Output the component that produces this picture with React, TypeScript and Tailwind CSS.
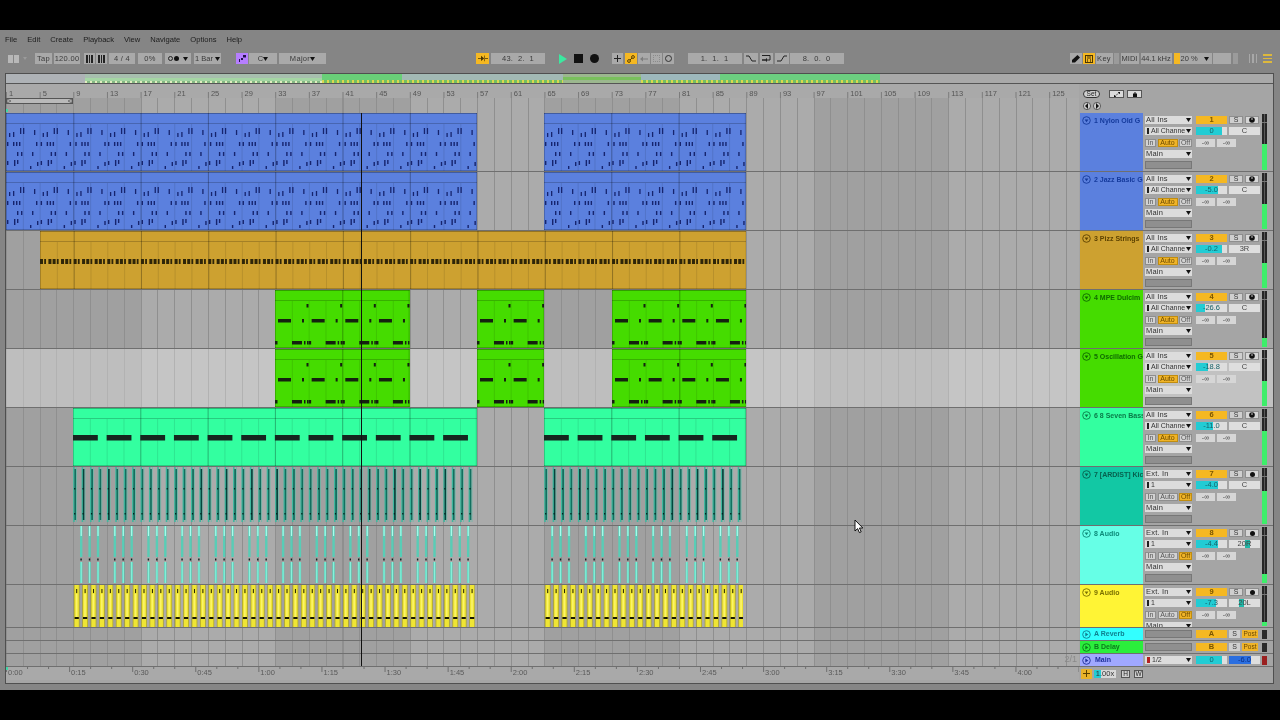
import React from "react";

const BAR = 8.4125;

type Kind = "midi" | "pizz" | "dul" | "bass" | "s7" | "s8" | "s9";

function ClipArt({ a, b, kind, h }: { a: number; b: number; kind: Kind; h: number }) {
  const left = (a - 1) * BAR;
  const w = (b - a) * BAR;
  const out: React.ReactNode[] = [];
  const r = (x: number, y: number, wd: number, ht: number, fill: string) => {
    if (x < w) out.push(<rect key={out.length} x={x} y={y} width={Math.min(wd, w - x)} height={ht} fill={fill} />);
  };
  const P = BAR * 4;
  const hasHead = kind === "midi" || kind === "pizz" || kind === "dul" || kind === "bass";
  if (hasHead) {
    const count = Math.ceil((left + w) / (BAR * 2)) + 1;
    for (let i = 0; i < count; i++) {
      const x = i * BAR * 2 - left;
      if (x <= 0 || x >= w) continue;
      if (i % 4 === 0) r(x, 0, 1, h, "rgba(0,0,0,0.3)");
      else r(x, 11, 1, h - 11, "rgba(0,0,0,0.1)");
    }
    r(0, 0, w, 1, "rgba(0,0,0,0.28)");
    r(0, 10, w, 1, "rgba(0,0,0,0.2)");
    r(0, 0, 1, h, "rgba(0,0,0,0.2)");
    r(w - 1, 0, 1, h, "rgba(0,0,0,0.2)");
    r(0, h - 1, w, 1, "rgba(0,0,0,0.2)");
  }
  const n = Math.ceil(w / P);
  for (let i = 0; i < n; i++) {
    const o = i * P;
    const v = i % 4;
    if (kind === "midi") {
      const c = "#16246e";
      [[3, 20, 4], [7, 19, 5], [14, 15, 6], [17, 15, 6], [28, 17, 5]].forEach(([x, y, t]) => r(o + x, y, 1.3, t, c));
      [[1, 29], [7, 29], [10, 29], [13, 29], [30, 29]].forEach(([x, y]) => r(o + x + (v === 2 ? 1 : 0), y, 1.4, 4, c));
      [[11, 39], [15, 39], [26, 39]].forEach(([x, y]) => r(o + x, y, 1.4, 4, c));
      [[1, 48, 4], [8, 47, 6], [11, 47, 4], [24, 53, 3], [31, 49, 4]].forEach(([x, y, t]) => r(o + x, y, 1.4, t, c));
    } else if (kind === "pizz") {
      for (let j = 0; j < 8; j++) r(o + j * 4.206, 28, j % 3 === 1 ? 1.8 : 3, 5, "#2e2508");
    } else if (kind === "dul") {
      const c = "#14200f";
      r(o + 31.5, 14, 2, 3.5, c);
      r(o + 3, 29, 13, 3.5, c);
      r(o + 27, 29, 2, 3.5, c);
      r(o, 51, 2.5, 3.5, c);
      r(o + 17, 51, 10, 3.5, c);
      r(o + 29, 51, 1.5, 3.5, c);
      r(o + 32, 51, 1.5, 3.5, c);
    } else if (kind === "bass") {
      r(o, 27, 24.8, 5.5, "#15261f");
    } else if (kind === "s7") {
      for (let j = 0; j < 4; j++) {
        const x = o + j * BAR + 0.2;
        const dark = (i + j) % 5 === 1 ? "#05453d" : "#12705f";
        r(x, 0, 1.6, h - 3, "#3fb89f");
        r(x + 1.2, 2, 1.8, h - 7, dark);
        r(x + 3, 0, 0.8, h - 3, "#6fb8a8");
        r(x + 0.9, 21, 1.2, 1.5, "#03221f");
        r(x + 0.9, 46, 1.2, 1.5, "#03221f");
      }
    } else if (kind === "s8") {
      for (let j = 0; j < 3; j++) {
        const x = o + 7 + j * BAR;
        r(x, 0, 2.4, 31, "#58cdb6");
        r(x, 36, 2.4, 21, "#58cdb6");
        r(x + 0.6, 0, 1.2, 10, "#a8ffee");
        r(x + 0.6, 36, 1.2, 21, "#86f2dc");
        r(x + 0.4, 32.5, 1.4, 2, "#10201c");
      }
    } else if (kind === "s9") {
      for (let j = 0; j < 4; j++) {
        const x = o + j * BAR + 0.8;
        r(x, 0, 5.8, 42, "#aea62e");
        r(x + 0.8, 0, 4.2, 42, "#efe534");
        r(x + 2, 9, 1.6, 23, "#fbf46a");
        r(x + 2.4, 4, 1, 4, "#222200");
        r(x + 0.8, 32, 4.2, 2, "#171700");
      }
    }
  }
  return (
    <svg className="absolute inset-0 block" width={w} height={h}>
      {out}
    </svg>
  );
}

function Clip({ a, b, color, kind, h }: { a: number; b: number; color: string; kind: Kind; h: number }) {
  return (
    <div className="absolute top-0" style={{ left: (a - 1) * BAR, width: (b - a) * BAR, height: h, background: color }}>
      <ClipArt a={a} b={b} kind={kind} h={h} />
    </div>
  );
}

const Caret = () => (
  <svg width="5" height="4" viewBox="0 0 5 4" className="shrink-0">
    <path d="M0 0H5L2.5 4Z" fill="#111" />
  </svg>
);

function Sel({ label, bar, red }: { label: string; bar?: boolean; red?: boolean }) {
  return (
    <div className={bar ? "h-[8px] shrink-0 bg-[#dcdcdc] flex items-center px-[1px] text-[7px] leading-[8px] text-[#333] overflow-hidden" : "h-[8px] shrink-0 bg-[#dcdcdc] flex items-center px-[1px] text-[7.5px] leading-[8px] tracking-[0.2px] text-[#333] overflow-hidden"}>
      {bar && <span className={red ? "w-[3px] h-[6px] bg-[#b52020] mr-[2px] ml-[1px] shrink-0" : "w-[2px] h-[6px] bg-[#222] mr-[2px] ml-[1px] shrink-0"} />}
      <span className="flex-1 overflow-hidden whitespace-nowrap">{label}</span>
      <Caret />
    </div>
  );
}

function MonBtn({ t, on, cls }: { t: string; on?: boolean; cls: string }) {
  return (
    <div className={`h-[8px] border text-[7px] leading-[6px] text-center shrink-0 ${cls} ${on ? "bg-[#f0b428] text-[#6b4a00] border-[#c08d10]" : "bg-[#d2d2d2] text-[#555] border-[#8e8e8e]"}`}>
      {t}
    </div>
  );
}

function Vol({ v, pct, color = "#22ccd4", txt = "#16626a" }: { v: string; pct: number; color?: string; txt?: string }) {
  return (
    <div className="relative w-[31px] h-[8px] bg-[#dedede] overflow-hidden">
      <div className="h-full" style={{ width: `${pct}%`, background: color }} />
      <div className="absolute inset-0 text-center text-[7.5px] leading-[8px]" style={{ color: txt }}>
        {v}
      </div>
    </div>
  );
}

function Pan({ v, from, to }: { v: string; from?: number; to?: number }) {
  return (
    <div className="relative w-[31px] h-[8px] bg-[#dedede] overflow-hidden">
      {from !== undefined && <div className="absolute top-0 bottom-0 bg-[#1fb8a8]" style={{ left: `${from}%`, width: `${(to ?? 0) - from}%` }} />}
      <div className="absolute inset-0 text-center text-[7.5px] leading-[8px] text-[#444]">{v}</div>
    </div>
  );
}

function Disc({ c, right }: { c: string; right?: boolean }) {
  return (
    <svg width="9" height="9" viewBox="0 0 9 9" className="shrink-0">
      <circle cx="4.5" cy="4.5" r="3.8" fill="none" stroke={c} strokeWidth="0.9" />
      {right ? <path d="M3.3 2.6L6.3 4.5L3.3 6.4Z" fill={c} /> : <path d="M2.6 3.4H6.4L4.5 6.2Z" fill={c} />}
    </svg>
  );
}

function Meter({ top, h }: { top: number; h: number }) {
  const green = h - top;
  return (
    <div className="relative w-[5px] h-full bg-[#262626] overflow-hidden">
      <div className="absolute left-[2px] top-0 bottom-0 w-[1px] bg-[#5a5a5a]" />
      <div className="absolute left-0 right-0 h-[1px] top-[8px] bg-[#777]" />
      <div className="absolute left-0 right-0 bottom-0 bg-[#3eee6a]" style={{ height: green }} />
    </div>
  );
}

type T = {
  name: string;
  color: string;
  txt: string;
  vol: string;
  pct: number;
  pan: string;
  panFrom?: number;
  panTo?: number;
  meterTop: number;
  ext?: boolean;
  selected?: boolean;
  clips: { a: number; b: number; kind: Kind; color: string }[];
  n: string;
  h: number;
};

const BLUE = "#5b80de";
const GREEN = "#45dc00";
const MINT = "#33ffa0";
const pair = (c: string, k: Kind, end = 57, e2 = 89) => [
  { a: 9, b: end, kind: k, color: c },
  { a: 65, b: e2, kind: k, color: c },
];
const dul = (c: string) => [
  { a: 33, b: 49, kind: "dul" as Kind, color: c },
  { a: 57, b: 65, kind: "dul" as Kind, color: c },
  { a: 73, b: 89, kind: "dul" as Kind, color: c },
];
const mid = [
  { a: 1, b: 57, kind: "midi" as Kind, color: BLUE },
  { a: 65, b: 89, kind: "midi" as Kind, color: BLUE },
];

const tracks: T[] = [
  { n: "1", name: "1 Nylon Old G", color: BLUE, txt: "#153a9c", vol: "0", pct: 83, pan: "C", meterTop: 30, clips: mid, h: 59 },
  { n: "2", name: "2 Jazz Basic G", color: BLUE, txt: "#153a9c", vol: "-5.0", pct: 70, pan: "C", meterTop: 31, clips: mid, h: 59 },
  { n: "3", name: "3 Pizz Strings", color: "#cda130", txt: "#5e4300", vol: "-0.2", pct: 84, pan: "3R", meterTop: 31, clips: [{ a: 5, b: 89, kind: "pizz", color: "#cda130" }], h: 59 },
  { n: "4", name: "4 MPE Dulcim", color: GREEN, txt: "#0f6a00", vol: "-26.6", pct: 28, pan: "C", meterTop: 47, clips: dul(GREEN), h: 59 },
  { n: "5", name: "5 Oscillation G", color: GREEN, txt: "#0f6a00", vol: "-18.8", pct: 38, pan: "C", meterTop: 31, selected: true, clips: dul(GREEN), h: 59 },
  { n: "6", name: "6 8 Seven Bass", color: MINT, txt: "#0a7a48", vol: "-11.0", pct: 55, pan: "C", meterTop: 22, clips: pair(MINT, "bass"), h: 59 },
  { n: "7", name: "7 [ARDIST] Kic", color: "#12c8a4", txt: "#07604e", vol: "-4.0", pct: 70, pan: "C", meterTop: 23, ext: true, clips: pair("transparent", "s7"), h: 59 },
  { n: "8", name: "8 Audio", color: "#66ffe6", txt: "#0d8a78", vol: "-4.4", pct: 72, pan: "20R", panFrom: 50, panTo: 68, meterTop: 47, ext: true, clips: pair("transparent", "s8"), h: 59 },
  { n: "9", name: "9 Audio", color: "#fff435", txt: "#7a7000", vol: "-7.3", pct: 65, pan: "20L", panFrom: 32, panTo: 50, meterTop: 36, ext: true, clips: pair("transparent", "s9", 56.75, 88.65), h: 43 },
];

const gridBg =
  "bg-[repeating-linear-gradient(90deg,#8f8f8f_0_1px,transparent_1px_16.825px),repeating-linear-gradient(90deg,#a0a0a0_0_134.6px,#ababab_134.6px_269.2px)]";

function Row({ t }: { t: T }) {
  return (
    <div className="flex border-b border-[#6f6f6f]" style={{ height: t.h }}>
      <div className={t.selected ? "relative flex-1 overflow-hidden bg-[#ffffff50]" : "relative flex-1 overflow-hidden"}>
        {t.clips.map((c, i) => (
          <Clip key={i} a={c.a} b={c.b} color={c.color} kind={c.kind} h={t.h - 1} />
        ))}
      </div>
      <div className={t.selected ? "w-[194px] shrink-0 flex bg-[#c2c2c2] pl-[1px]" : "w-[194px] shrink-0 flex bg-[#a5a5a5] pl-[1px]"}>
        <div className="w-[63px] shrink-0 pl-[2px] pt-[3px] flex items-start gap-[3px] overflow-hidden" style={{ background: t.color }}>
          <Disc c={t.txt} />
          <span className="text-[7px] leading-[9px] font-bold whitespace-nowrap" style={{ color: t.txt }}>
            {t.name}
          </span>
        </div>
        <div className="w-[51px] shrink-0 px-[2px] pt-[3px] flex flex-col gap-[3.3px] overflow-hidden">
          <Sel label={t.ext ? "Ext. In" : "All Ins"} />
          <Sel label={t.ext ? "1" : "All Channe"} bar />
          <div className="flex justify-between shrink-0">
            <MonBtn t="In" cls="w-[11px]" />
            <MonBtn t="Auto" on={!t.ext} cls="w-[20px]" />
            <MonBtn t="Off" on={t.ext} cls="w-[13px]" />
          </div>
          <Sel label="Main" />
          <div className="h-[8px] shrink-0 bg-[#8f8f8f] border border-[#777]" />
        </div>
        <div className="w-[68px] shrink-0 pl-[2px] pt-[3px] flex flex-col gap-[3.3px]">
          <div className="flex gap-[2px]">
            <div className="w-[31px] h-[8px] bg-[#f5b822] text-[#7a5500] text-[7.5px] leading-[8px] text-center font-bold">{t.n}</div>
            <div className="w-[14px] h-[8px] bg-[#cfcfcf] border border-[#8e8e8e] text-[#333] text-[7px] leading-[6px] text-center">S</div>
            <div className="w-[14px] h-[8px] bg-[#d6d6d6] border border-[#8e8e8e] flex items-center justify-center">
              {t.ext ? (
                <span className="w-[5px] h-[5px] rounded-full bg-[#111]" />
              ) : (
                <svg width="6" height="6" viewBox="0 0 6 6">
                  <circle cx="3" cy="3" r="2.8" fill="#111" />
                  <path d="M3 .8V3" stroke="#ddd" strokeWidth="0.9" />
                </svg>
              )}
            </div>
          </div>
          <div className="flex gap-[2px]">
            <Vol v={t.vol} pct={t.pct} />
            <Pan v={t.pan} from={t.panFrom} to={t.panTo} />
          </div>
          <div className="flex gap-[2px]">
            <div className="w-[19px] h-[8px] bg-[#d6d6d6] text-[#444] text-[7px] leading-[8px] text-center">-∞</div>
            <div className="w-[19px] h-[8px] bg-[#d6d6d6] text-[#444] text-[7px] leading-[8px] text-center">-∞</div>
          </div>
        </div>
        <div className="py-[1px]">
          <Meter top={t.meterTop} h={t.h - 3} />
        </div>
      </div>
    </div>
  );
}

function ReturnRow({ name, color, txt, letter, h }: { name: string; color: string; txt: string; letter: string; h: string }) {
  return (
    <div className={`flex border-b border-[#6f6f6f] ${h}`}>
      <div className="flex-1" />
      <div className="w-[194px] shrink-0 flex bg-[#a5a5a5] pl-[1px]">
        <div className="w-[63px] shrink-0 pl-[2px] flex items-center gap-[3px] overflow-hidden" style={{ background: color }}>
          <Disc c={txt} right />
          <span className="text-[7px] font-bold" style={{ color: txt }}>
            {name}
          </span>
        </div>
        <div className="w-[51px] shrink-0 px-[2px] flex items-center">
          <div className="w-full h-[8px] bg-[#8f8f8f] border border-[#777]" />
        </div>
        <div className="w-[68px] shrink-0 pl-[2px] flex items-center gap-[2px]">
          <div className="w-[31px] h-[8px] bg-[#f5b822] text-[#7a5500] text-[7.5px] leading-[8px] text-center font-bold">{letter}</div>
          <div className="w-[11px] h-[8px] bg-[#cfcfcf] text-[#333] text-[7px] leading-[8px] text-center">S</div>
          <div className="w-[16px] h-[8px] bg-[#f0b428] text-[#6b4a00] text-[6.5px] leading-[8px] text-center">Post</div>
        </div>
        <div className="flex items-center">
          <div className="w-[5px] h-[9px] bg-[#2a2a2a]" />
        </div>
      </div>
    </div>
  );
}

const Btn = ({ className, children }: { className: string; children?: React.ReactNode }) => (
  <div className={`h-[11px] shrink-0 bg-[#a9a9a9] flex items-center justify-center whitespace-nowrap text-[7.5px] tracking-[0.3px] text-[#3a3a3a] ${className}`}>{children}</div>
);

const rulerBars = Array.from({ length: 32 }, (_, i) => 1 + i * 4);
const times = ["0:00", "0:15", "0:30", "0:45", "1:00", "1:15", "1:30", "1:45", "2:00", "2:15", "2:30", "2:45", "3:00", "3:15", "3:30", "3:45", "4:00"];

function Cursor() {
  return (
    <svg className="absolute left-[854px] top-[519px]" width="10" height="15" viewBox="0 0 10 15">
      <path d="M1 1L1 12L3.6 9.6L5.4 13.6L7.2 12.8L5.4 9L8.8 9Z" fill="#fff" stroke="#000" strokeWidth="0.9" />
    </svg>
  );
}

export default function App() {
  return (
    <div className="relative w-[1280px] h-[720px] overflow-hidden bg-black pt-[30px] font-['Liberation_Sans',sans-serif] blur-[0.35px]">
      <div className="h-[660px] bg-[#858585]">
        <div className="h-[4px]" />
        <div className="flex gap-[10px] pl-[5px] h-[12px] items-center text-[7.6px] text-[#1d1d1d]">
          {["File", "Edit", "Create", "Playback", "View", "Navigate", "Options", "Help"].map((m) => (
            <span key={m}>{m}</span>
          ))}
        </div>
        {/* toolbar */}
        <div className="flex mt-[7px] h-[11px] items-center pl-[8px] pr-[8px]">
          <div className="flex items-center">
            <div className="w-[5px] h-[8px] bg-[#b8b8b8]" />
            <div className="w-[5px] h-[8px] bg-[#b8b8b8] ml-[1px]" />
            <div className="ml-[4px] w-0 h-0 border-l-[2.5px] border-r-[2.5px] border-t-[3px] border-l-transparent border-r-transparent border-t-[#9b9b9b]" />
            <Btn className="w-[17px] ml-[8px]">Tap</Btn>
            <Btn className="w-[26px] ml-[2px]">120.00</Btn>
            <Btn className="w-[11px] ml-[4px] gap-[1px]">
              {[0, 1, 2].map((i) => <span key={i} className="w-[1.5px] h-[8px] bg-[#222]" />)}
            </Btn>
            <Btn className="w-[11px] ml-[1px] gap-[1px]">
              {[0, 1, 2].map((i) => <span key={i} className="w-[1.5px] h-[8px] bg-[#222]" />)}
            </Btn>
            <Btn className="w-[26px] ml-[2px]">4 / 4</Btn>
            <Btn className="w-[24px] ml-[3px]">0%</Btn>
            <Btn className="w-[26px] ml-[3px] gap-[1px]">
              <span className="w-[5px] h-[5px] rounded-full border border-[#222]" />
              <span className="w-[5px] h-[5px] rounded-full bg-[#111]" />
              <span className="ml-[3px]"><Caret /></span>
            </Btn>
            <Btn className="w-[27px] ml-[3px] gap-[2px] tracking-[0px]">
              1 Bar <Caret />
            </Btn>
            <div className="w-[12px] h-[11px] ml-[15px] bg-[#b67eff] flex items-center justify-center">
              <svg width="8" height="7" viewBox="0 0 8 7"><path d="M1 4H2V7H1ZM3 3H5V5H3ZM5 0H8V2.5H5Z" fill="#22134a" /></svg>
            </div>
            <Btn className="w-[28px] ml-[1px] justify-between px-[2px]">
              C <Caret />
            </Btn>
            <Btn className="w-[47px] ml-[2px] justify-between px-[3px]">
              Major <Caret />
            </Btn>
          </div>
          <div className="flex items-center ml-[150px]">
            <div className="w-[13px] h-[11px] bg-[#f5b822] flex items-center justify-center">
              <svg width="10" height="7" viewBox="0 0 10 7"><path d="M0 3H3V3.8H0ZM7 3H10V3.8H7ZM3 .8L6.2 3.4L3 6ZM6.4 .5H7V6.3H6.4Z" fill="#4a3500" /></svg>
            </div>
            <Btn className="w-[54px] ml-[2px]">43.&nbsp;&nbsp;2.&nbsp;&nbsp;1</Btn>
            <svg className="ml-[14px]" width="8" height="10" viewBox="0 0 8 10"><path d="M0 0L8 5L0 10Z" fill="#3ce8a0" /></svg>
            <div className="ml-[7px] w-[9px] h-[9px] bg-[#111]" />
            <div className="ml-[7px] w-[8.5px] h-[8.5px] rounded-full bg-[#111]" />
            <Btn className="w-[11px] ml-[13px]">
              <svg width="7" height="7" viewBox="0 0 7 7"><path d="M3 0H4V3H7V4H4V7H3V4H0V3H3Z" fill="#222" /></svg>
            </Btn>
            <div className="w-[12px] h-[11px] ml-[2px] bg-[#f5b822] flex items-center justify-center">
              <svg width="8" height="8" viewBox="0 0 8 8"><circle cx="2" cy="6" r="1.4" fill="none" stroke="#5a4000" /><circle cx="6" cy="2" r="1.4" fill="none" stroke="#5a4000" /><path d="M3 5L5 3" stroke="#5a4000" /></svg>
            </div>
            <Btn className="w-[12px] ml-[1px]">
              <svg width="8" height="6" viewBox="0 0 8 6"><path d="M0 3L3 .5V2.5H8V3.5H3V5.5Z" fill="#7d7d7d" /></svg>
            </Btn>
            <Btn className="w-[11px] ml-[1px]">
              <div className="w-[7px] h-[7px] border border-dotted border-[#8a8a8a]" />
            </Btn>
            <Btn className="w-[11px] ml-[1px]">
              <div className="w-[7px] h-[7px] rounded-full border border-[#333]" />
            </Btn>
            <Btn className="w-[54px] ml-[14px]">1.&nbsp;&nbsp;1.&nbsp;&nbsp;1</Btn>
            <Btn className="w-[14px] ml-[2px]">
              <svg width="10" height="7" viewBox="0 0 10 7"><path d="M0 1H3L6 6H10" fill="none" stroke="#222" /></svg>
            </Btn>
            <Btn className="w-[13px] ml-[2px]">
              <svg width="10" height="8" viewBox="0 0 10 8"><path d="M1 .5H9V5H6M4 5H1Z" fill="none" stroke="#222" /><path d="M6 3V7L3.5 5Z" fill="#222" /></svg>
            </Btn>
            <Btn className="w-[14px] ml-[2px]">
              <svg width="10" height="7" viewBox="0 0 10 7"><path d="M0 6H4L7 1H10" fill="none" stroke="#222" /></svg>
            </Btn>
            <Btn className="w-[54px] ml-[1px]">8.&nbsp;&nbsp;0.&nbsp;&nbsp;0</Btn>
          </div>
          <div className="flex items-center ml-auto">
            <Btn className="w-[12px]">
              <svg width="8" height="8" viewBox="0 0 8 8"><path d="M5.5 0L8 2.5L3 7.5H0V5Z" fill="#111" /></svg>
            </Btn>
            <div className="w-[12px] h-[11px] ml-[1px] bg-[#f5b822] flex items-center justify-center">
              <svg width="8" height="8" viewBox="0 0 8 8"><path d="M0 0H8V8H0ZM1 1V7H2.3V4H3V7H5V4H5.7V7H7V1H5.5V4H4.5V1H3.5V4H2.5V1Z" fill="#4a3500" /></svg>
            </div>
            <Btn className="w-[17px] ml-[1px]">Key</Btn>
            <div className="w-[5px] h-[11px] ml-[1px] bg-[#9b9b9b]" />
            <Btn className="w-[18px] ml-[2px] tracking-[0px]">MIDI</Btn>
            <Btn className="w-[31px] ml-[2px] tracking-[0px]">44.1 kHz</Btn>
            <div className="relative w-[38px] h-[11px] ml-[2px] bg-[#a9a9a9] flex items-center text-[7.5px] text-[#3a3a3a]">
              <span className="w-[6px] h-full bg-[#f5b822]" />
              <span className="ml-[1px]">20 %</span>
              <span className="ml-auto mr-[3px]"><Caret /></span>
            </div>
            <Btn className="w-[18px] ml-[1px]" />
            <div className="w-[5px] h-[11px] ml-[2px] bg-[#9b9b9b]" />
            <div className="ml-[11px] flex gap-[2px]">
              {[0, 1, 2].map((i) => <span key={i} className="w-[1.5px] h-[9px] bg-[#a8a8a8]" />)}
            </div>
            <div className="ml-[6px] w-[9px] flex flex-col gap-[2px]">
              {[0, 1, 2].map((i) => <span key={i} className="h-[1.5px] bg-[#ddb83c]" />)}
            </div>
          </div>
        </div>

        {/* arrangement panel */}
        <div className="ml-[5px] mt-[9px] w-[1269px] h-[611px] border border-[#4f4f4f] bg-[#a5a5a5] flex flex-col">
          {/* overview */}
          <div className="h-[9px] shrink-0 flex bg-[#a9a9a9] overflow-hidden">
            <div className="w-[79px] bg-[#aeb2b6]" />
            <div className="w-[237px] bg-[linear-gradient(180deg,#a7bfae_0_45%,#a5d6a4_45%_100%)] flex items-end">
              <div className="w-full h-[2px] bg-[repeating-linear-gradient(90deg,#e3eec0_0_2px,#84b884_2px_5px)]" />
            </div>
            <div className="w-[241px] bg-[linear-gradient(90deg,#69cf78_0_33%,#a2b9b4_33%_100%)] flex items-end">
              <div className="w-full h-[3px] bg-[repeating-linear-gradient(90deg,#dcd850_0_2px,#74c060_2px_5px)]" />
            </div>
            <div className="w-[78px] bg-[#9bb78e] flex items-center">
              <div className="w-full h-[3px] bg-[#79c05c]" />
            </div>
            <div className="w-[239px] bg-[linear-gradient(90deg,#9db8bc_0_33%,#6ccf80_33%_100%)] flex items-end">
              <div className="w-full h-[3px] bg-[repeating-linear-gradient(90deg,#dcd850_0_2px,#74c060_2px_5px)]" />
            </div>
          </div>
          <div className="h-[1px] shrink-0 bg-[#555]" />
          {/* ruler */}
          <div className="h-[29px] shrink-0 flex">
            <div className="relative flex-1 bg-[#a9a9a9] overflow-hidden">
              <div className={`absolute left-0 right-0 top-[14px] bottom-0 ${gridBg}`} />
              <svg className="absolute inset-0" width="1073" height="29">
                {rulerBars.map((b) => (
                  <rect key={b} x={(b - 1) * BAR} y={8} width={1} height={6} fill="#7c7c7c" />
                ))}
              </svg>
              {rulerBars.map((b) => (
                <span key={b} className="absolute top-[5px] text-[7.5px] leading-[9px] text-[#555]" style={{ left: (b - 1) * BAR + 3 }}>
                  {b}
                </span>
              ))}
              <div className="absolute left-0 top-[14px] w-[67px] h-[6px] bg-[#b9b9b9] border border-[#555]" />
              <svg className="absolute left-0 top-[14px]" width="67" height="7">
                <path d="M1 1L5 3L1 5Z" fill="#bbb" stroke="#555" strokeWidth="0.7" />
                <path d="M66 1L62 3L66 5Z" fill="#bbb" stroke="#555" strokeWidth="0.7" />
              </svg>
              <div className="absolute left-0 bottom-[1px] w-[2px] h-[3px] bg-[#3fd8a8]" />
            </div>
            <div className="relative w-[194px] shrink-0 bg-[#a5a5a5] pl-[4px] pt-[6px]">
              <div className="flex items-center">
                <div className="w-[17px] h-[8px] rounded-full border border-[#333] bg-[#d0d0d0] text-[6.5px] leading-[6px] text-center text-[#222]">Set</div>
                <div className="ml-[9px] w-[15px] h-[8px] bg-[#dadada] border border-[#555] flex items-center justify-center">
                  <svg width="6" height="5" viewBox="0 0 6 5"><path d="M0 5V3L2 5ZM6 0V2L4 0ZM1.5 3.5L4.5 1.5" fill="#111" stroke="#111" strokeWidth="0.5" /></svg>
                </div>
                <div className="ml-[3px] w-[15px] h-[8px] bg-[#dadada] border border-[#555] flex items-center justify-center">
                  <svg width="6" height="5" viewBox="0 0 6 5"><path d="M1 2H5V5H1Z" fill="#111" /><path d="M2 2V1H4V2" fill="none" stroke="#111" /></svg>
                </div>
              </div>
              <div className="flex gap-[2px] mt-[4px]">
                {["M5 1L2 4L5 7", "M3 1L6 4L3 7"].map((d) => (
                  <svg key={d} width="8" height="8" viewBox="0 0 8 8">
                    <circle cx="4" cy="4" r="3.6" fill="#d0d0d0" stroke="#333" strokeWidth="0.7" />
                    <path d={d} fill="#111" />
                  </svg>
                ))}
              </div>
            </div>
          </div>
          {/* tracks */}
          <div className="relative h-[553px] shrink-0 flex flex-col">
            <div className={`absolute left-0 top-0 bottom-0 right-[194px] ${gridBg}`} />
            <div className="relative flex flex-col">
              {tracks.map((t) => (
                <Row key={t.n} t={t} />
              ))}
              <ReturnRow name="A Reverb" color="#33ffff" txt="#0f7f8f" letter="A" h="h-[13px]" />
              <ReturnRow name="B Delay" color="#2bee3c" txt="#0c7a1c" letter="B" h="h-[13px]" />
              <div className="flex h-[12px]">
                <div className="relative flex-1">
                  <span className="absolute right-[2px] top-0 text-[9px] leading-[11px] text-[#8a8a8a]">2/1</span>
                </div>
                <div className="w-[194px] shrink-0 flex bg-[#a5a5a5] pl-[1px]">
                  <div className="w-[63px] shrink-0 pl-[2px] flex items-center gap-[4px] bg-[#a0a8ff]">
                    <Disc c="#1f2f9c" right />
                    <span className="text-[7px] font-bold text-[#1f2f9c]">Main</span>
                  </div>
                  <div className="w-[51px] shrink-0 px-[2px] flex flex-col justify-center">
                    <Sel label="1/2" bar red />
                  </div>
                  <div className="w-[68px] shrink-0 pl-[2px] flex items-center gap-[2px]">
                    <Vol v="0" pct={85} />
                    <Vol v="-6.0" pct={70} color="#2a6ee0" txt="#0d2f80" />
                  </div>
                  <div className="flex items-center">
                    <div className="w-[5px] h-[9px] bg-[#9a2020]" />
                  </div>
                </div>
              </div>
            </div>
            <div className="absolute left-[355px] top-0 bottom-0 w-[1px] bg-[#101010]" />
          </div>
          {/* time ruler */}
          <div className="h-[14px] shrink-0 flex border-t border-[#6f6f6f]">
            <div className="relative flex-1 bg-[#a9a9a9] overflow-hidden">
              <svg className="absolute inset-0" width="1073" height="14">
                {Array.from({ length: 52 }, (_, i) => (
                  <rect key={i} x={i * 21.03} y={0} width={1} height={i % 3 === 0 ? 5 : 2} fill="#6f6f6f" />
                ))}
              </svg>
              {times.map((s, i) => (
                <span key={s} className="absolute top-[1px] text-[7.5px] leading-[10px] text-[#5a5a5a]" style={{ left: i * 63.09 + 2 }}>
                  {s}
                </span>
              ))}
              <div className="absolute left-0 top-0 w-[2px] h-[3px] bg-[#3fd8a8]" />
            </div>
            <div className="w-[194px] shrink-0 flex items-center pl-[2px]">
              <div className="w-[11px] h-[10px] bg-[#eab32a] flex items-center justify-center">
                <svg width="7" height="7" viewBox="0 0 7 7"><path d="M3 0H4V3H7V4H4V7H3V4H0V3H3Z" fill="#5a4000" /></svg>
              </div>
              <div className="relative ml-[2px] w-[22px] h-[8px] bg-[#d8d8d8] text-[7.5px] leading-[8px] text-center text-[#333] overflow-hidden">
                <div className="absolute left-0 top-0 bottom-0 w-[7px] bg-[#22ccd4]" />
                <span className="relative">1.00x</span>
              </div>
              <div className="ml-[5px] w-[9px] h-[8px] bg-[#d0d0d0] border border-[#555] text-[6.5px] leading-[6px] text-center text-[#222]">H</div>
              <div className="ml-[4px] w-[9px] h-[8px] bg-[#d0d0d0] border border-[#555] text-[6.5px] leading-[6px] text-center text-[#222]">W</div>
            </div>
          </div>
          <div className="flex-1 bg-[#a5a5a5]" />
        </div>
      </div>
      <Cursor />
    </div>
  );
}
